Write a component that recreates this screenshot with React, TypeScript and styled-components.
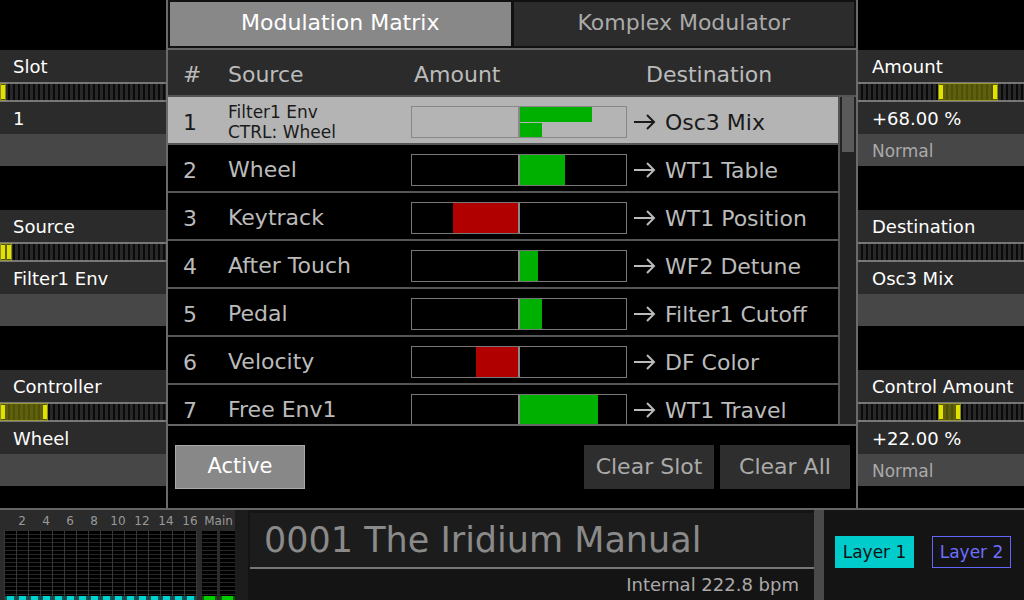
import React from "react";
import styled, { createGlobalStyle } from "styled-components";

const GlobalStyle = createGlobalStyle`
  html, body { margin: 0; padding: 0; background: #000; }
  body { font-family: "DejaVu Sans", "Liberation Sans", sans-serif; }
  * { box-sizing: border-box; }
`;

// ---------- data ----------

interface ParamData {
  label: string;
  value: string;
  sub: string;
  range: [number, number];
}

const leftParams: ParamData[] = [
  { label: "Slot", value: "1", sub: "", range: [0, 0.037] },
  { label: "Source", value: "Filter1 Env", sub: "", range: [0, 0.073] },
  { label: "Controller", value: "Wheel", sub: "", range: [0, 0.29] },
];

const rightParams: ParamData[] = [
  { label: "Amount", value: "+68.00 %", sub: "Normal", range: [0.482, 0.843] },
  { label: "Destination", value: "Osc3 Mix", sub: "", range: [-1, -1] },
  { label: "Control Amount", value: "+22.00 %", sub: "Normal", range: [0.482, 0.62] },
];

interface ModRow {
  n: number;
  source: string[];
  amounts: number[];
  dest: string;
  selected?: boolean;
}

const modRows: ModRow[] = [
  { n: 1, source: ["Filter1 Env", "CTRL: Wheel"], amounts: [0.68, 0.21], dest: "Osc3 Mix", selected: true },
  { n: 2, source: ["Wheel"], amounts: [0.42], dest: "WT1 Table" },
  { n: 3, source: ["Keytrack"], amounts: [-0.61], dest: "WT1 Position" },
  { n: 4, source: ["After Touch"], amounts: [0.17], dest: "WF2 Detune" },
  { n: 5, source: ["Pedal"], amounts: [0.21], dest: "Filter1 Cutoff" },
  { n: 6, source: ["Velocity"], amounts: [-0.4], dest: "DF Color" },
  { n: 7, source: ["Free Env1"], amounts: [0.74], dest: "WT1 Travel" },
];

const meterLabels = ["2", "4", "6", "8", "10", "12", "14", "16"];

// ---------- layout ----------

const Screen = styled.div`
  width: 1024px;
  height: 600px;
  overflow: hidden;
  background: #000;
  display: flex;
  flex-direction: column;
  color: #fff;
  font-family: "DejaVu Sans", "Liberation Sans", sans-serif;
`;

const Main = styled.div`
  display: flex;
  height: 508px;
`;

const SidePanel = styled.div`
  width: 166px;
  padding-top: 50px;
  display: flex;
  flex-direction: column;
  gap: 44px;
`;

const ParamBlock = styled.div`
  display: flex;
  flex-direction: column;
`;

const ParamRow = styled.div<{ $pad: number; $tone: "label" | "value" | "sub" }>`
  height: 32px;
  line-height: 32px;
  padding: 1px 0 0 ${(p) => p.$pad}px;
  font-size: ${(p) => (p.$tone === "sub" ? 17 : 18)}px;
  background: ${(p) => (p.$tone === "sub" ? "#474747" : "#2b2b2b")};
  color: ${(p) => (p.$tone === "sub" ? "#aaa" : "#fff")};
  white-space: nowrap;
`;

const Strip = styled.div`
  position: relative;
  height: 20px;
  border-top: 2px solid #777;
  border-bottom: 2px solid #777;
  background: repeating-linear-gradient(90deg, #282828 0 3px, #0a0a0a 3px 5px);
`;

const Handle = styled.div`
  position: absolute;
  top: -1px;
  bottom: -1px;
  background: rgba(140, 140, 0, 0.55);
  border: 1px solid rgba(170, 170, 60, 0.55);
  &::before,
  &::after {
    content: "";
    position: absolute;
    top: 1px;
    bottom: 1px;
    width: 4px;
    background: #e2e200;
  }
  &::before { left: 0; }
  &::after { right: 0; }
`;

const Center = styled.div`
  width: 692px;
  border-left: 2px solid #6a6a6a;
  border-right: 2px solid #6a6a6a;
  display: flex;
  flex-direction: column;
`;

const TabBar = styled.div`
  height: 50px;
  display: flex;
  gap: 3px;
  padding: 2px;
  background: #111;
  border-bottom: 2px solid #666;
`;

const Tab = styled.div<{ $active?: boolean }>`
  flex: 1;
  display: flex;
  align-items: center;
  justify-content: center;
  padding-bottom: 3px;
  font-size: 22px;
  background: ${(p) => (p.$active ? "#888" : "#2c2c2c")};
  color: ${(p) => (p.$active ? "#fff" : "#aaa")};
`;

const HeaderRow = styled.div`
  height: 47px;
  background: #2b2b2b;
  border-bottom: 2px solid #555;
  display: grid;
  grid-template-columns: 45px 186px 232px 1fr;
  align-items: center;
  padding: 3px 0 0 15px;
  font-size: 22px;
  color: #bbb;
`;

const Body = styled.div`
  height: 327px;
  display: flex;
  overflow: hidden;
`;

const Rows = styled.div`
  flex: 1;
  overflow: hidden;
`;

const Row = styled.div<{ $selected?: boolean }>`
  height: 48px;
  border-bottom: 2px solid #555;
  display: grid;
  grid-template-columns: 45px 183px 216px 1fr;
  align-items: center;
  padding: 4px 0 0 15px;
  font-size: 22px;
  background: ${(p) => (p.$selected ? "#b4b4b4" : "#000")};
  color: ${(p) => (p.$selected ? "#1a1a1a" : "#bbb")};
`;

const SourceCell = styled.div<{ $double?: boolean }>`
  display: flex;
  flex-direction: column;
  font-size: ${(p) => (p.$double ? 17 : 22)}px;
  line-height: ${(p) => (p.$double ? 20 : 26)}px;
  white-space: nowrap;
`;

const AmountBox = styled.div<{ $selected?: boolean }>`
  height: 32px;
  border: 1px solid ${(p) => (p.$selected ? "#888" : "#777")};
  display: grid;
  grid-template-columns: 1fr 2px 1fr;
`;

const Divider = styled.div`
  background: #888;
`;

const Half = styled.div<{ $neg?: boolean }>`
  display: flex;
  flex-direction: column;
  gap: 1px;
  align-items: ${(p) => (p.$neg ? "flex-end" : "flex-start")};
`;

const Bar = styled.div<{ $neg?: boolean }>`
  flex: 1;
  background: ${(p) => (p.$neg ? "#b00000" : "#00b000")};
`;

const DestCell = styled.div`
  display: flex;
  align-items: center;
  gap: 9px;
  padding-left: 6px;
  white-space: nowrap;
`;

const Scrollbar = styled.div`
  width: 18px;
  background: #232323;
  border-left: 2px solid #555;
  padding: 0 2px;
`;

const Thumb = styled.div`
  height: 55px;
  background: #5a5a5a;
`;

const Footer = styled.div`
  height: 84px;
  border-top: 2px solid #666;
  display: flex;
  align-items: center;
  gap: 6px;
  padding: 0 6px 0 7px;
`;

const Button = styled.div<{ $active?: boolean }>`
  width: 130px;
  height: 44px;
  display: flex;
  align-items: center;
  justify-content: center;
  padding-bottom: 2px;
  font-size: ${(p) => (p.$active ? 21 : 22)}px;
  background: ${(p) => (p.$active ? "#888" : "#2e2e2e")};
  color: ${(p) => (p.$active ? "#fff" : "#aaa")};
  border: ${(p) => (p.$active ? "1px solid #aaa" : "none")};
  margin-right: ${(p) => (p.$active ? "auto" : "0")};
`;

// ---------- bottom ----------

const Bottom = styled.div`
  height: 92px;
  border-top: 2px solid #666;
  display: flex;
`;

const MeterBlock = styled.div`
  width: 235px;
  background: #2b2b2b;
  display: flex;
  flex-direction: column;
`;

const MeterLabels = styled.div`
  height: 21px;
  display: grid;
  grid-template-columns: repeat(8, 24px) 33px;
  padding-left: 10px;
  align-items: center;
  font-size: 12px;
  color: #999;
  text-align: center;
`;

const MeterArea = styled.div`
  flex: 1;
  display: flex;
  padding-left: 4px;
`;

const ChannelGrid = styled.div`
  display: grid;
  grid-template-columns: repeat(16, 11px);
  gap: 1px;
  background: #383838;
  padding: 0 1px;
  margin-right: 5px;
`;

const MainGrid = styled.div`
  display: grid;
  grid-template-columns: 15px 15px;
  gap: 3px;
`;

const MeterColumn = styled.div`
  display: flex;
  flex-direction: column;
  justify-content: flex-end;
  background: repeating-linear-gradient(180deg, #000 0 3px, #262626 3px 4px);
`;

const MeterCap = styled.div<{ $main?: boolean }>`
  height: 4px;
  background: ${(p) => (p.$main ? "#00cc00" : "#00d2d2")};
  border-left: 2px solid ${(p) => (p.$main ? "#0a5a0a" : "#0b5656")};
  border-right: 2px solid ${(p) => (p.$main ? "#0a5a0a" : "#0b5656")};
`;

const MeterGap = styled.div`
  width: 13px;
  background: #1c1c1c;
`;

const PatchArea = styled.div`
  width: 566px;
  background: #141414;
  display: flex;
  flex-direction: column;
`;

const PatchName = styled.div`
  height: 56px;
  margin: 3px 0 0 2px;
  padding-left: 14px;
  background: #1c1c1c;
  border-bottom: 2px solid #777;
  display: flex;
  align-items: center;
  font-size: 35px;
  color: #8a8a8a;
  white-space: nowrap;
`;

const Tempo = styled.div`
  flex: 1;
  display: flex;
  align-items: center;
  justify-content: flex-end;
  padding-right: 15px;
  font-size: 18px;
  color: #aaa;
`;

const SideStrip = styled.div`
  width: 10px;
  background: #4a4a4a;
`;

const LayerArea = styled.div`
  flex: 1;
  background: #141414;
  display: flex;
  align-items: flex-start;
  gap: 18px;
  padding: 26px 0 0 11px;
`;

const LayerButton = styled.div<{ $active?: boolean }>`
  width: 79px;
  height: 32px;
  display: flex;
  align-items: center;
  justify-content: center;
  font-size: 17px;
  background: ${(p) => (p.$active ? "#00cccc" : "transparent")};
  color: ${(p) => (p.$active ? "#111" : "#6e6eff")};
  border: ${(p) => (p.$active ? "none" : "1.5px solid #6464ff")};
`;

// ---------- components ----------

function Param({ data, pad }: { data: ParamData; pad: number }) {
  const [from, to] = data.range;
  return (
    <ParamBlock>
      <ParamRow $pad={pad} $tone="label">{data.label}</ParamRow>
      <Strip>
        {from >= 0 && (
          <Handle style={{ left: `${from * 100}%`, width: `${(to - from) * 100}%` }} />
        )}
      </Strip>
      <ParamRow $pad={pad} $tone="value">{data.value}</ParamRow>
      <ParamRow $pad={pad} $tone="sub">{data.sub}</ParamRow>
    </ParamBlock>
  );
}

function Arrow({ color }: { color: string }) {
  return (
    <svg width="23" height="16" viewBox="0 0 23 16" fill="none">
      <path d="M1 8H21M14 1L21 8L14 15" stroke={color} strokeWidth="2" />
    </svg>
  );
}

function Amount({ amounts, selected }: { amounts: number[]; selected?: boolean }) {
  return (
    <AmountBox $selected={selected}>
      <Half $neg>
        {amounts.map((a, i) => (
          <Bar key={i} $neg style={{ width: `${a < 0 ? -a * 100 : 0}%` }} />
        ))}
      </Half>
      <Divider />
      <Half>
        {amounts.map((a, i) => (
          <Bar key={i} style={{ width: `${a > 0 ? a * 100 : 0}%` }} />
        ))}
      </Half>
    </AmountBox>
  );
}

export default function App() {
  return (
    <>
      <GlobalStyle />
      <Screen>
        <Main>
          <SidePanel>
            {leftParams.map((p) => (
              <Param key={p.label} data={p} pad={13} />
            ))}
          </SidePanel>

          <Center>
            <TabBar>
              <Tab $active>Modulation Matrix</Tab>
              <Tab>Komplex Modulator</Tab>
            </TabBar>
            <HeaderRow>
              <span>#</span>
              <span>Source</span>
              <span>Amount</span>
              <span>Destination</span>
            </HeaderRow>
            <Body>
              <Rows>
                {modRows.map((r) => (
                  <Row key={r.n} $selected={r.selected}>
                    <span>{r.n}</span>
                    <SourceCell $double={r.source.length > 1}>
                      {r.source.map((s) => (
                        <span key={s}>{s}</span>
                      ))}
                    </SourceCell>
                    <Amount amounts={r.amounts} selected={r.selected} />
                    <DestCell>
                      <Arrow color={r.selected ? "#1a1a1a" : "#bbb"} />
                      <span>{r.dest}</span>
                    </DestCell>
                  </Row>
                ))}
              </Rows>
              <Scrollbar>
                <Thumb />
              </Scrollbar>
            </Body>
            <Footer>
              <Button $active>Active</Button>
              <Button>Clear Slot</Button>
              <Button>Clear All</Button>
            </Footer>
          </Center>

          <SidePanel>
            {rightParams.map((p) => (
              <Param key={p.label} data={p} pad={14} />
            ))}
          </SidePanel>
        </Main>

        <Bottom>
          <MeterBlock>
            <MeterLabels>
              {meterLabels.map((l) => (
                <span key={l}>{l}</span>
              ))}
              <span>Main</span>
            </MeterLabels>
            <MeterArea>
              <ChannelGrid>
                {Array.from({ length: 16 }).map((_, i) => (
                  <MeterColumn key={i}>
                    <MeterCap />
                  </MeterColumn>
                ))}
              </ChannelGrid>
              <MainGrid>
                <MeterColumn>
                  <MeterCap $main />
                </MeterColumn>
                <MeterColumn>
                  <MeterCap $main />
                </MeterColumn>
              </MainGrid>
            </MeterArea>
          </MeterBlock>
          <MeterGap />
          <PatchArea>
            <PatchName>0001 The Iridium Manual</PatchName>
            <Tempo>Internal 222.8 bpm</Tempo>
          </PatchArea>
          <SideStrip />
          <LayerArea>
            <LayerButton $active>Layer 1</LayerButton>
            <LayerButton>Layer 2</LayerButton>
          </LayerArea>
        </Bottom>
      </Screen>
    </>
  );
}
